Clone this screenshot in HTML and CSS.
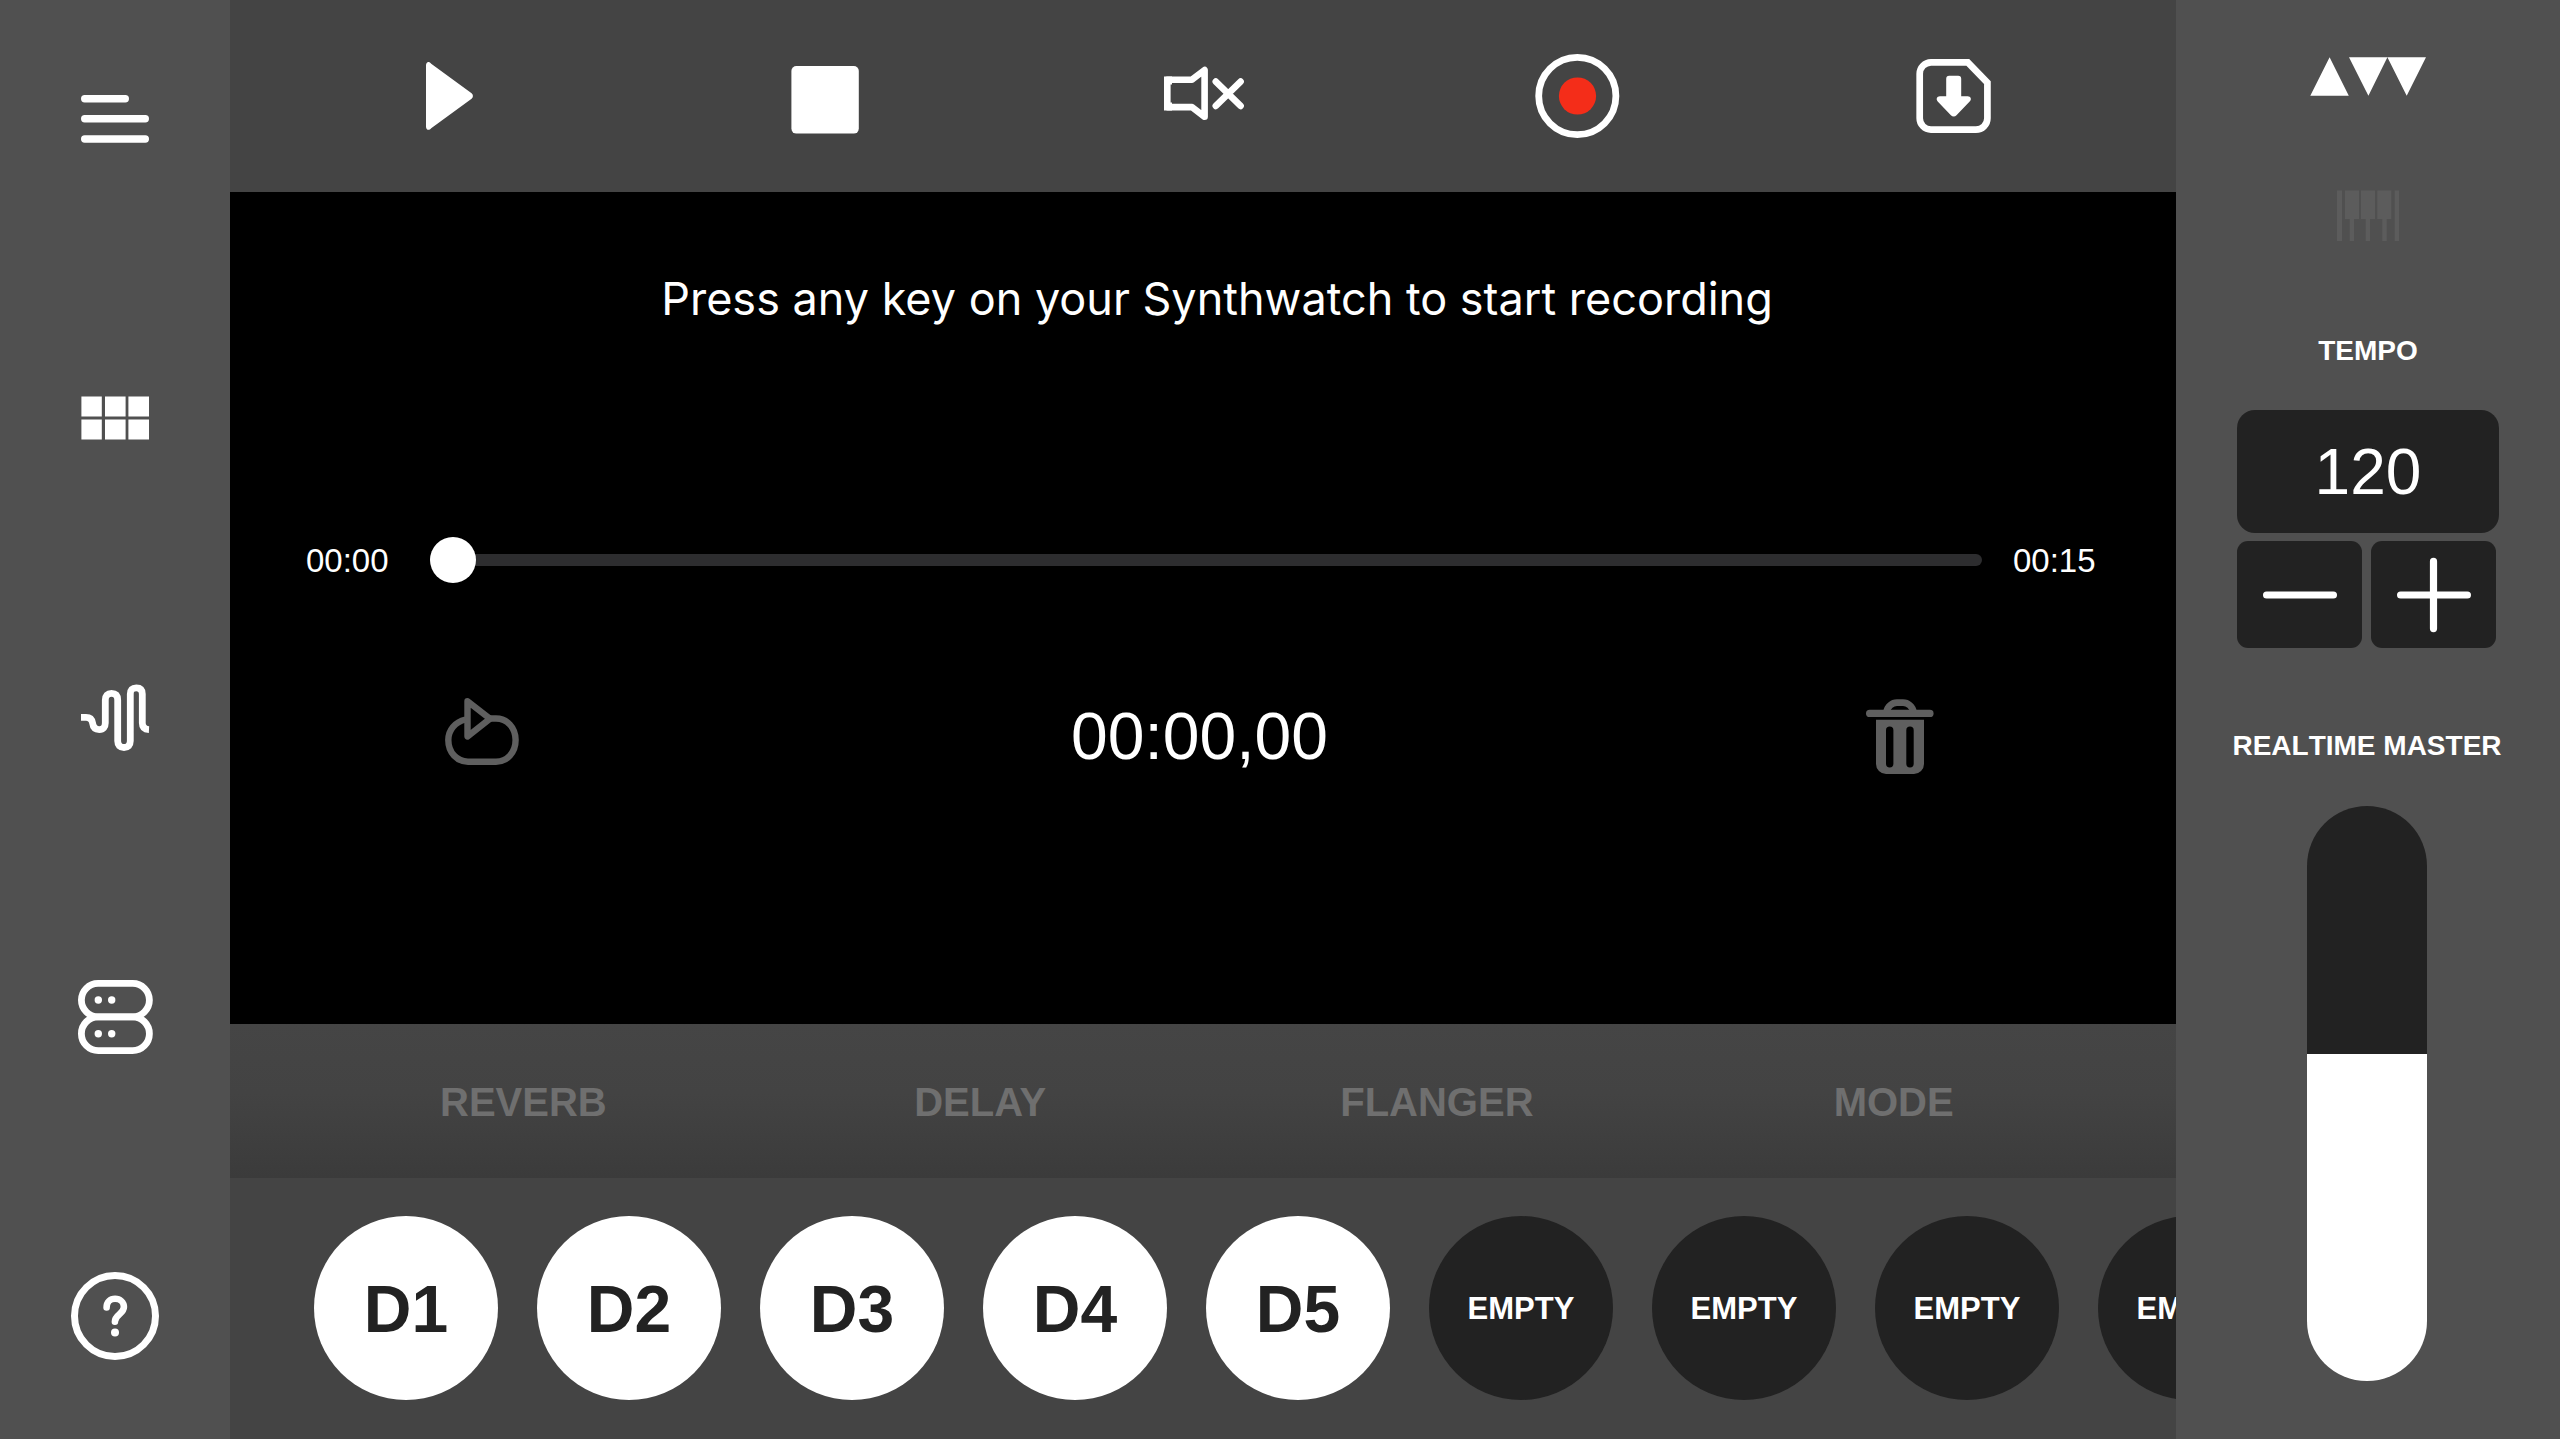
FILE: index.html
```html
<!DOCTYPE html>
<html lang="en">
<head>
<meta charset="utf-8">
<meta name="viewport" content="width=device-width, initial-scale=1">
<title>Synthwatch</title>
<link rel="stylesheet" href="styles.css">
</head>
<body>
<div class="app">
  <nav class="rail" aria-label="Sections">
    <button class="rail-button" type="button" aria-label="Menu">
      <svg width="68" height="48" viewBox="0 0 68 48" fill="currentColor"><rect width="48" height="7.5" rx="3.7"/><rect y="20" width="68" height="7.5" rx="3.7"/><rect y="40.2" width="68" height="7.5" rx="3.7"/></svg>
    </button>
    <button class="rail-button" type="button" aria-label="Pads">
      <svg width="68" height="44" viewBox="0 0 68 44" fill="currentColor"><path d="M.4.4h20.4v20.2H.4zM24 .4h20.6v20.2H24zM47.4.4H68v20.2H47.4zM.4 23.4h20.4v20.2H.4zM24 23.4h20.6v20.2H24zM47.4 23.4H68v20.2H47.4z"/></svg>
    </button>
    <button class="rail-button" type="button" aria-label="Sound">
      <svg width="68" height="68" viewBox="0 0 68 68" fill="none" stroke="currentColor" stroke-width="6.8"><path d="M0 33.3h5c4 0 6 2 6.5 5.5c.6 4.5 3 6.8 6.8 6.8c4 0 6-2.5 6-6.6V16c0-4.5 2.2-6.7 6.2-6.7s6.2 2.2 6.2 6.7v41c0 4.2 2.2 6.5 6.3 6.5s6.3-2.3 6.3-6.5V10c0-4.2 2-6.2 6-6.2s6 2 6 6.2v29c0 4.3 2.3 6.4 6.7 6.6"/></svg>
    </button>
    <button class="rail-button" type="button" aria-label="Library">
      <svg width="75" height="74" viewBox="0 0 75 74"><g fill="none" stroke="currentColor" stroke-width="6.8"><rect x="3.4" y="3.4" width="68" height="33.4" rx="16.7"/><rect x="3.4" y="36.8" width="68" height="33.8" rx="16.9"/></g><g fill="currentColor"><circle cx="20.3" cy="20" r="3.7"/><circle cx="33.7" cy="20" r="3.7"/><circle cx="20.3" cy="53.7" r="3.7"/><circle cx="33.7" cy="53.7" r="3.7"/></g></svg>
    </button>
    <button class="rail-button" type="button" aria-label="Help">
      <svg width="88" height="88" viewBox="0 0 88 88" fill="none" stroke="currentColor"><circle cx="44" cy="44" r="40.5" stroke-width="7"/><path d="M35.6 35.5c0-5.3 3.7-8.7 8.5-8.7s8.8 3.3 8.8 8.3c0 7-9 7.4-9 14.6" stroke-width="6.6" stroke-linecap="round"/><circle cx="44" cy="60.5" r="4" fill="currentColor" stroke="none"/></svg>
    </button>
  </nav>

  <main class="deck">
    <div class="transport" role="toolbar" aria-label="Transport">
      <button class="transport-button" type="button" aria-label="Play">
        <svg width="84" height="84" viewBox="0 0 84 84" fill="currentColor"><path d="M19 11.5c0-3.6 3-4.6 5.2-1.7l40.4 29.4c1.8 1.6 1.8 4 0 5.6L24.200 74.200C22 77 19 76.100 19 72.500z"/></svg>
      </button>
      <button class="transport-button" type="button" aria-label="Stop">
        <svg width="84" height="84" viewBox="0 0 84 84" fill="currentColor"><rect x="8.4" y="12" width="67.4" height="67.6" rx="5"/></svg>
      </button>
      <button class="transport-button" type="button" aria-label="Mute">
        <svg width="84" height="84" viewBox="0 0 84 84" fill="none" stroke="currentColor" stroke-width="6.6"><path d="M8.3 25.7H33L45.6 16V62.8L33 53.1H8.3z" stroke-linejoin="round"/><path d="M5 22.4h8v8H5zM5 48.4h8v8H5z" fill="currentColor" stroke="none"/><path d="M56.8 27.6 81.6 51.9M81.6 27.6 56.8 51.9" stroke-linecap="round"/></svg>
      </button>
      <button class="transport-button" type="button" aria-label="Record">
        <svg width="84" height="84" viewBox="0 0 84 84"><circle cx="42.3" cy="42" r="38.6" fill="none" stroke="currentColor" stroke-width="6.8"/><circle cx="42.5" cy="42" r="18.6" fill="#f42d19"/></svg>
      </button>
      <button class="transport-button" type="button" aria-label="Save">
        <svg width="84" height="84" viewBox="0 0 84 84"><path d="M20 8.3H56.8L76.4 28.6V64.2a11.5 11.5 0 0 1-11.5 11.5H20A11.5 11.5 0 0 1 8.7 64.2V19.8A11.5 11.5 0 0 1 20 8.3z" fill="none" stroke="currentColor" stroke-width="6.7"/><path d="M38.2 21.7h9a3 3 0 0 1 3 3V42.3h6.5c3 0 4.2 3 2.2 5L45.5 61.2c-1.6 1.6-4 1.6-5.6 0L26.7 47.5c-2-2.2-.8-5.2 2.2-5.2h6.3V24.7a3 3 0 0 1 3-3z" fill="currentColor"/></svg>
      </button>
    </div>

    <section class="stage" aria-label="Recorder">
      <p class="message">Press any key on your Synthwatch to start recording</p>
      <div class="timeline">
        <label class="time" for="position">00:00</label>
        <input class="position" id="position" type="range" min="0" max="15" value="0">
        <span class="time">00:15</span>
      </div>
      <div class="take">
        <button class="take-button" type="button" aria-label="Loop playback">
          <svg width="74" height="76" viewBox="0 0 74 76" fill="none" stroke="currentColor" stroke-width="6.4" stroke-linejoin="round"><path d="M22.5 3.2 45 20.7 22.5 38.4z"/><path d="M20.5 21.5C10 24 3.3 32 3.3 42C3.3 54.5 12 63.7 23 63.7H51C62 63.7 70.6 54.5 70.6 42S62 20.5 51 20.5H45"/></svg>
        </button>
        <output class="counter">00:00,00</output>
        <button class="take-button" type="button" aria-label="Delete take">
          <svg width="68" height="76" viewBox="0 0 68 76" fill="currentColor"><path d="M20.5 14c1-5.5 5.5-9.3 10.5-9.3h6c5 0 9.5 3.8 10.5 9.3" fill="none" stroke="currentColor" stroke-width="6.8"/><rect y="11.7" width="67.6" height="7.4" rx="3.7"/><path fill-rule="evenodd" d="M10 21.7h48V66a10 10 0 0 1-10 10H20a10 10 0 0 1-10-10zM20 32.3v33.4a3.7 3.7 0 0 0 7.4 0V32.3a3.7 3.7 0 0 0-7.4 0zM40.3 32.3v33.4a3.7 3.7 0 0 0 7.4 0V32.3a3.7 3.7 0 0 0-7.4 0z"/></svg>
        </button>
      </div>
    </section>

    <div class="effects">
      <button class="effect" type="button" disabled>REVERB</button>
      <button class="effect" type="button" disabled>DELAY</button>
      <button class="effect" type="button" disabled>FLANGER</button>
      <button class="effect" type="button" disabled>MODE</button>
    </div>

    <div class="pads">
      <button class="pad" type="button">D1</button>
      <button class="pad" type="button">D2</button>
      <button class="pad" type="button">D3</button>
      <button class="pad" type="button">D4</button>
      <button class="pad" type="button">D5</button>
      <button class="pad pad-empty" type="button">EMPTY</button>
      <button class="pad pad-empty" type="button">EMPTY</button>
      <button class="pad pad-empty" type="button">EMPTY</button>
      <button class="pad pad-empty" type="button">EMPTY</button>
    </div>
  </main>

  <aside class="panel" aria-label="Settings">
    <svg class="logo" width="116" height="39" viewBox="0 0 116 39" fill="currentColor" role="img" aria-label="Logo"><path d="M.3 38.8 19.6.3 38.8 38.8zM39 .2h38.4L58.4 38.8zM77.4.2H116L96.7 38.8z"/></svg>
    <svg class="keys" width="62" height="51" viewBox="0 0 62 51" fill="currentColor" aria-hidden="true"><path d="M0 .6h5V51H0zM57.7.6H62V51h-4.300zM8 .6h14V29h-5v22h-4.300V29H8zM24 .6h14V29h-5v22h-4.300V29H24zM40.300.6h14V29h-4.600v22h-4.400V29h-5z"/></svg>
    <div class="tempo">
      <label class="caption" for="tempo">TEMPO</label>
      <input class="tempo-value" id="tempo" type="text" inputmode="numeric" value="120">
      <div class="steps">
        <button class="step" type="button" aria-label="Slower">
          <svg width="76" height="76" viewBox="0 0 76 76" fill="none" stroke="currentColor" stroke-width="7.2" stroke-linecap="round"><path d="M4.6 38h66.8"/></svg>
        </button>
        <button class="step" type="button" aria-label="Faster">
          <svg width="76" height="76" viewBox="0 0 76 76" fill="none" stroke="currentColor" stroke-width="7.2" stroke-linecap="round"><path d="M4.6 38h66.8M37.5 4.4v67.2"/></svg>
        </button>
      </div>
    </div>
    <div class="master">
      <label class="caption" for="master">REALTIME MASTER</label>
      <input class="level" id="master" type="range" min="0" max="100" step="0.1" value="56.8" style="--level: 56.8%">
    </div>
  </aside>
</div>
</body>
</html>
```
FILE: styles.css
```css
:root {
  --ink: #222;
  --side: #505050;
  --deck: #444;
  --muted: #5f5f5f;
}

* {
  box-sizing: border-box;
}

body {
  margin: 0;
  background: var(--side);
  color: #fff;
  font-family: "Liberation Sans", Arial, Helvetica, sans-serif;
}

button,
input {
  margin: 0;
  padding: 0;
  border: 0;
  background: none;
  color: inherit;
  font: inherit;
}

svg {
  display: block;
  flex: none;
  overflow: visible;
}

.app {
  display: grid;
  grid-template-columns: 230px minmax(0, 1fr) 384px;
  min-height: 100vh;
}

/* Left rail */
.rail {
  display: flex;
  flex-direction: column;
  align-items: center;
  justify-content: space-between;
  padding: 75px 0 79px;
}

.rail-button {
  display: grid;
  place-items: center;
  width: 88px;
  height: 88px;
}

/* Centre column */
.deck {
  display: flex;
  flex-direction: column;
  background: var(--deck);
}

.transport {
  display: grid;
  grid-template-columns: repeat(5, 1fr);
  height: 192px;
  padding: 0 35px 0 31px;
}

.transport-button {
  display: grid;
  place-items: center;
}

.stage {
  flex: 1;
  display: flex;
  flex-direction: column;
  padding-top: 79px;
  background: #000;
}

.message {
  margin: 0 0 210px;
  padding-left: 28px;
  font-family: Inter, "Noto Sans", sans-serif;
  font-size: 45px;
  line-height: 56px;
  text-align: center;
}

.timeline {
  display: grid;
  grid-template-columns: 82px 1fr 82px;
  align-items: center;
  height: 46px;
  margin-bottom: 115px;
  padding: 0 81px 0 76px;
}

.time {
  padding-top: 2px;
  font-size: 33px;
  line-height: 40px;
}

.position {
  appearance: none;
  height: 46px;
  margin: 0 31px 0 42px;
}

.position::-webkit-slider-runnable-track {
  height: 12px;
  border-radius: 6px;
  background: #2d2d2f;
}

.position::-webkit-slider-thumb {
  appearance: none;
  width: 46px;
  height: 46px;
  margin-top: -17px;
  border-radius: 50%;
  background: #fff;
}

.take {
  display: flex;
  align-items: center;
  justify-content: space-between;
  padding: 0 242px 0 215px;
}

.take-button {
  color: var(--muted);
}

.counter {
  padding-left: 14px;
  font-size: 66px;
  line-height: 76px;
}

.effects {
  display: grid;
  grid-template-columns: repeat(4, 1fr);
  height: 154px;
  padding: 3px 54px 0 65px;
  background: linear-gradient(#454545, #434343 45%, #3b3b3b);
}

.effect {
  color: #6f6f6f;
  font-size: 40px;
  font-weight: bold;
}

.pads {
  display: flex;
  gap: 39px;
  padding: 38px 0 39px 84px;
  overflow: hidden;
}

.pad {
  flex: none;
  width: 184px;
  height: 184px;
  padding-top: 2px;
  border-radius: 50%;
  background: #fff;
  color: var(--ink);
  font-size: 66px;
  font-weight: bold;
}

.pad-empty {
  background: var(--ink);
  color: #fff;
  font-size: 31px;
}

/* Right panel */
.panel {
  display: flex;
  flex-direction: column;
  align-items: center;
  padding: 57px 0 58px;
}

.keys {
  margin: 94px 0;
  color: #5c5c5c;
}

.tempo,
.master {
  display: flex;
  flex-direction: column;
  align-items: center;
}

.caption {
  font-size: 28px;
  font-weight: bold;
  line-height: 32px;
  font-kerning: none;
}

.tempo-value {
  width: 262px;
  height: 123px;
  margin: 43px 0 8px;
  border-radius: 18px;
  background: var(--ink);
  font-size: 64px;
  text-align: center;
}

.steps {
  display: flex;
  align-self: flex-start;
  gap: 9px;
}

.step {
  display: grid;
  place-items: center;
  width: 125px;
  height: 107px;
  border-radius: 11px;
  background: var(--ink);
}

.master {
  flex: 1;
  gap: 44px;
  padding: 82px 2px 0 0;
}

.level {
  flex: 1;
  appearance: none;
  width: 120px;
  border-radius: 60px;
  background: linear-gradient(to top, #fff var(--level), var(--ink) var(--level));
  writing-mode: vertical-lr;
  direction: rtl;
}

.level::-webkit-slider-thumb {
  appearance: none;
  width: 120px;
  height: 1px;
  background: transparent;
}
```
